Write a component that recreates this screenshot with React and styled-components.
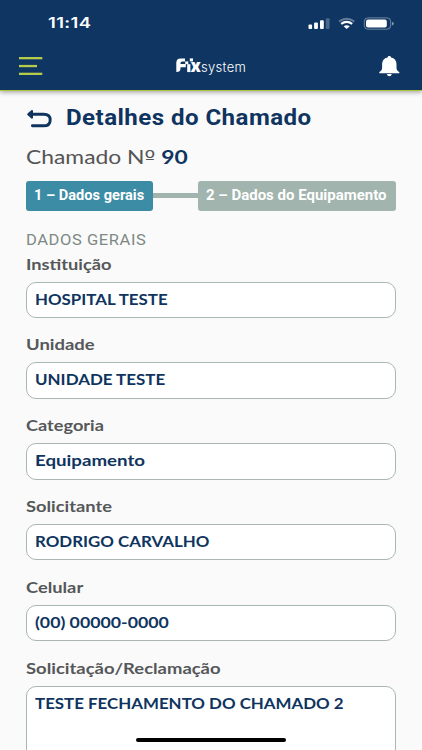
import React from 'react';
import styled, { createGlobalStyle } from 'styled-components';

const fields = [
    { label: 'Instituição', value: 'HOSPITAL TESTE', labelScale: 1.215, scale: 1.155 },
    { label: 'Unidade', value: 'UNIDADE TESTE', labelScale: 1.23, scale: 1.16 },
    { label: 'Categoria', value: 'Equipamento', labelScale: 1.21, scale: 1.28 },
    { label: 'Solicitante', value: 'RODRIGO CARVALHO', labelScale: 1.22, scale: 1.157 },
    { label: 'Celular', value: '(00) 00000-0000', labelScale: 1.22, scale: 1.215 },
    { label: 'Solicitação/Reclamação', value: 'TESTE FECHAMENTO DO CHAMADO 2', labelScale: 1.228, scale: 1.157, tall: true },
];

function StatusIcons() {
    return (
        <svg width="88" height="16" viewBox="0 0 88 16" fill="#fff">
            <rect x="0.5" y="9.5" width="3.6" height="4.6" rx="1" />
            <rect x="6.1" y="7.5" width="3.8" height="6.6" rx="1" />
            <rect x="12" y="5.2" width="3.8" height="8.9" rx="1" />
            <rect x="17.8" y="3.2" width="3.8" height="10.9" rx="1" opacity="0.25" />
            <path d="M31 6.6Q38.6 0.7 46.4 6.6" fill="none" stroke="#fff" strokeWidth="1.9" opacity="0.35" />
            <path d="M33.2 8.9Q38.6 5 44.2 8.9" fill="none" stroke="#fff" strokeWidth="2.2" />
            <path d="M35.6 11.3Q38.6 9.1 41.8 11.3L38.7 13.9Z" />
            <rect x="56.3" y="2.9" width="26.4" height="11.3" rx="3.6" fill="none" stroke="#fff" strokeOpacity="0.4" />
            <rect x="58" y="4.5" width="20.8" height="8.1" rx="2" />
            <path d="M84 6.7Q85.8 7.1 85.8 8.5T84 10.5Z" opacity="0.5" />
        </svg>
    );
}

function MenuIcon() {
    return (
        <svg width="24" height="20" viewBox="0 0 24 20" fill="#B4CB4B">
            <rect x="0" y="1" width="23.3" height="2.3" />
            <rect x="0" y="8.9" width="18" height="2.3" />
            <rect x="0" y="16.7" width="23.3" height="2.3" />
        </svg>
    );
}

function BellIcon() {
    return (
        <svg width="21" height="22" viewBox="0 0 21 22" fill="#fff">
            <path d="M10.3 0.9C11.4 0.9 12 1.5 12 2.6C15.6 3.3 17.5 5.8 17.5 9.2V12.8C17.5 14.8 18.4 16.1 20.3 17.1V18.2H0.3V17.1C2.2 16.1 3.1 14.8 3.1 12.8V9.2C3.1 5.8 5 3.3 8.6 2.6C8.6 1.5 9.2 0.9 10.3 0.9Z" />
            <path d="M7.9 19H12.8Q12.3 21.2 10.3 21.2T7.9 19Z" />
        </svg>
    );
}

function BackIcon() {
    return (
        <svg width="27" height="20" viewBox="0 0 27 20" fill="none" stroke="#0F3460" strokeWidth="2.9" strokeLinecap="round" strokeLinejoin="round">
            <path d="M3.5 6.3H17.5C22 6.3 24.2 8.4 24.2 11.9S22 17.8 17.5 17.8H6.4" />
            <path d="M6 2.9L2.2 6.3L6 9.7Z" fill="#0F3460" strokeWidth="2" />
        </svg>
    );
}

function LogoMark() {
    return (
        <svg width="18" height="16" viewBox="0 0 18 16" fill="#fff">
            <path d="M0.3 14.6V5.2Q0.3 0.9 4.8 0.9H9V4H6.2Q4.5 4 4.5 5.6V6.6H9.8V9.8H4.5V11Q4.5 14.6 0.3 14.6Z" />
            <rect x="9.2" y="3.9" width="3.1" height="2.8" />
            <rect x="13.8" y="0.9" width="3.2" height="3" />
            <rect x="11.2" y="6.7" width="3.2" height="7.9" />
        </svg>
    );
}

export default function App() {
    return (
        <Screen>
            <GlobalStyle />
            <Header>
                <StatusBar>
                    <Clock>11:14</Clock>
                    <StatusIcons />
                </StatusBar>
                <NavBar>
                    <IconButton aria-label="Menu"><MenuIcon /></IconButton>
                    <Logo>
                        <LogoMark />
                        <strong>x</strong>
                        <span>system</span>
                    </Logo>
                    <IconButton aria-label="Notificações"><BellIcon /></IconButton>
                </NavBar>
            </Header>
            <Content>
                <TitleRow>
                    <BackIcon />
                    <Title>Detalhes do Chamado</Title>
                </TitleRow>
                <Ticket>Chamado N<Ordinal>º</Ordinal> <b>90</b></Ticket>
                <Steps>
                    <Step $active $width={127.3}><Stretch $scale={1.042}>1 – Dados gerais</Stretch></Step>
                    <Connector />
                    <Step $width={198.8}><Stretch $scale={1.07}>2 – Dados do Equipamento</Stretch></Step>
                </Steps>
                <SectionTitle>DADOS GERAIS</SectionTitle>
                {fields.map((field) => (
                    <Field key={field.label}>
                        <Label $scale={field.labelScale}>{field.label}</Label>
                        <Value $tall={field.tall}>
                            <Stretch $scale={field.scale}>{field.value}</Stretch>
                        </Value>
                    </Field>
                ))}
            </Content>
            <HomeIndicator />
        </Screen>
    );
}

const GlobalStyle = createGlobalStyle`
    * {
        box-sizing: border-box;
    }

    body {
        margin: 0;
        overflow: hidden;
        background: #fafafa;
    }
`;

const Screen = styled.div`
    position: relative;
    width: 422px;
    height: 750px;
    overflow: hidden;
    background: #fafafa;
    font-family: Lato, sans-serif;
`;

const Header = styled.header`
    height: 91.3px;
    background: #0f3562;
    border-bottom: 1.6px solid #b0c53c;
    box-shadow: 0 1px 5px rgba(0, 0, 0, 0.4);
`;

const StatusBar = styled.div`
    display: flex;
    justify-content: space-between;
    align-items: center;
    height: 46px;
    padding: 0 26px 0 48px;
`;

/* widened lettering, anchored to its left edge */
const Stretch = styled.span`
    display: inline-block;
    white-space: nowrap;
    transform: scaleX(${({ $scale }) => $scale});
    transform-origin: left center;
`;

const Clock = styled(Stretch).attrs({ $scale: 1.26 })`
    color: #fff;
    font: 600 14.6px/20px Inter, sans-serif;
    letter-spacing: 0.3px;
`;

const NavBar = styled.nav`
    display: flex;
    justify-content: space-between;
    align-items: center;
    height: 40px;
    padding: 0 22px 0 19px;
`;

const IconButton = styled.button`
    display: flex;
    padding: 0;
    border: 0;
    background: none;
`;

const Logo = styled.div`
    display: flex;
    align-items: baseline;
    color: #fff;
    font: 13px/18px Inter, sans-serif;

    svg {
        margin-right: -3.2px;
        transform: translateY(1.5px);
    }

    strong {
        font-size: 17px;
        font-weight: 900;
    }

    span {
        font-weight: 300;
        letter-spacing: 0.35px;
    }
`;

const Content = styled.main`
    padding: 12.7px 25.7px 0;
`;

const TitleRow = styled.div`
    display: flex;
    align-items: center;
    gap: 13.5px;
    height: 28px;
`;

const Title = styled(Stretch).attrs({ as: 'h1', $scale: 1.12 })`
    margin: 0;
    color: #0f3460;
    font: 700 21.5px/28px Roboto, sans-serif;
    letter-spacing: 0.4px;
`;

const Ticket = styled(Stretch).attrs({ $scale: 1.235 })`
    display: block;
    width: max-content;
    margin-top: 11px;
    color: #555;
    font-size: 18.5px;
    line-height: 28px;

    b {
        color: #0f3460;
    }
`;

const Ordinal = styled.span`
    font-family: "DejaVu Sans", sans-serif;
    line-height: 1;
`;

const Steps = styled.div`
    display: flex;
    align-items: center;
    margin-top: 10px;
`;

const Step = styled.div`
    width: ${({ $width }) => $width}px;
    height: 29.6px;
    padding-left: 8px;
    border-radius: 3px;
    background: ${({ $active }) => ($active ? '#3c8ca6' : '#a1b4ad')};
    color: #fff;
    font: 700 14px/29px Roboto, sans-serif;
`;

const Connector = styled.div`
    flex: 1;
    height: 4.6px;
    background: #a1b4ad;
`;

const SectionTitle = styled(Stretch).attrs({ as: 'h2', $scale: 1.14 })`
    display: block;
    width: max-content;
    margin: 18px 0 0;
    color: #7e8985;
    font: 400 14.5px/24px Roboto, sans-serif;
    letter-spacing: 0.5px;
`;

const Field = styled.div`
    display: flex;
    flex-direction: column;
    align-items: flex-start;
    height: 80.8px;
`;

const Label = styled(Stretch)`
    height: 29px;
    flex-shrink: 0;
    color: #555759;
    font-size: 15px;
    font-weight: 700;
    line-height: 22px;
`;

const Value = styled.div`
    width: 100%;
    flex-shrink: 0;
    height: ${({ $tall }) => ($tall ? '90px' : '36.4px')};
    padding-left: 8.3px;
    border: 1px solid #a9b7b3;
    border-radius: 10px;
    background: #fff;
    color: #0f3460;
    font-size: 14.6px;
    font-weight: 700;
    line-height: 33px;
`;

const HomeIndicator = styled.div`
    position: absolute;
    bottom: 7.6px;
    left: 136.3px;
    width: 150px;
    height: 4.4px;
    border-radius: 3px;
    background: #000;
`;
